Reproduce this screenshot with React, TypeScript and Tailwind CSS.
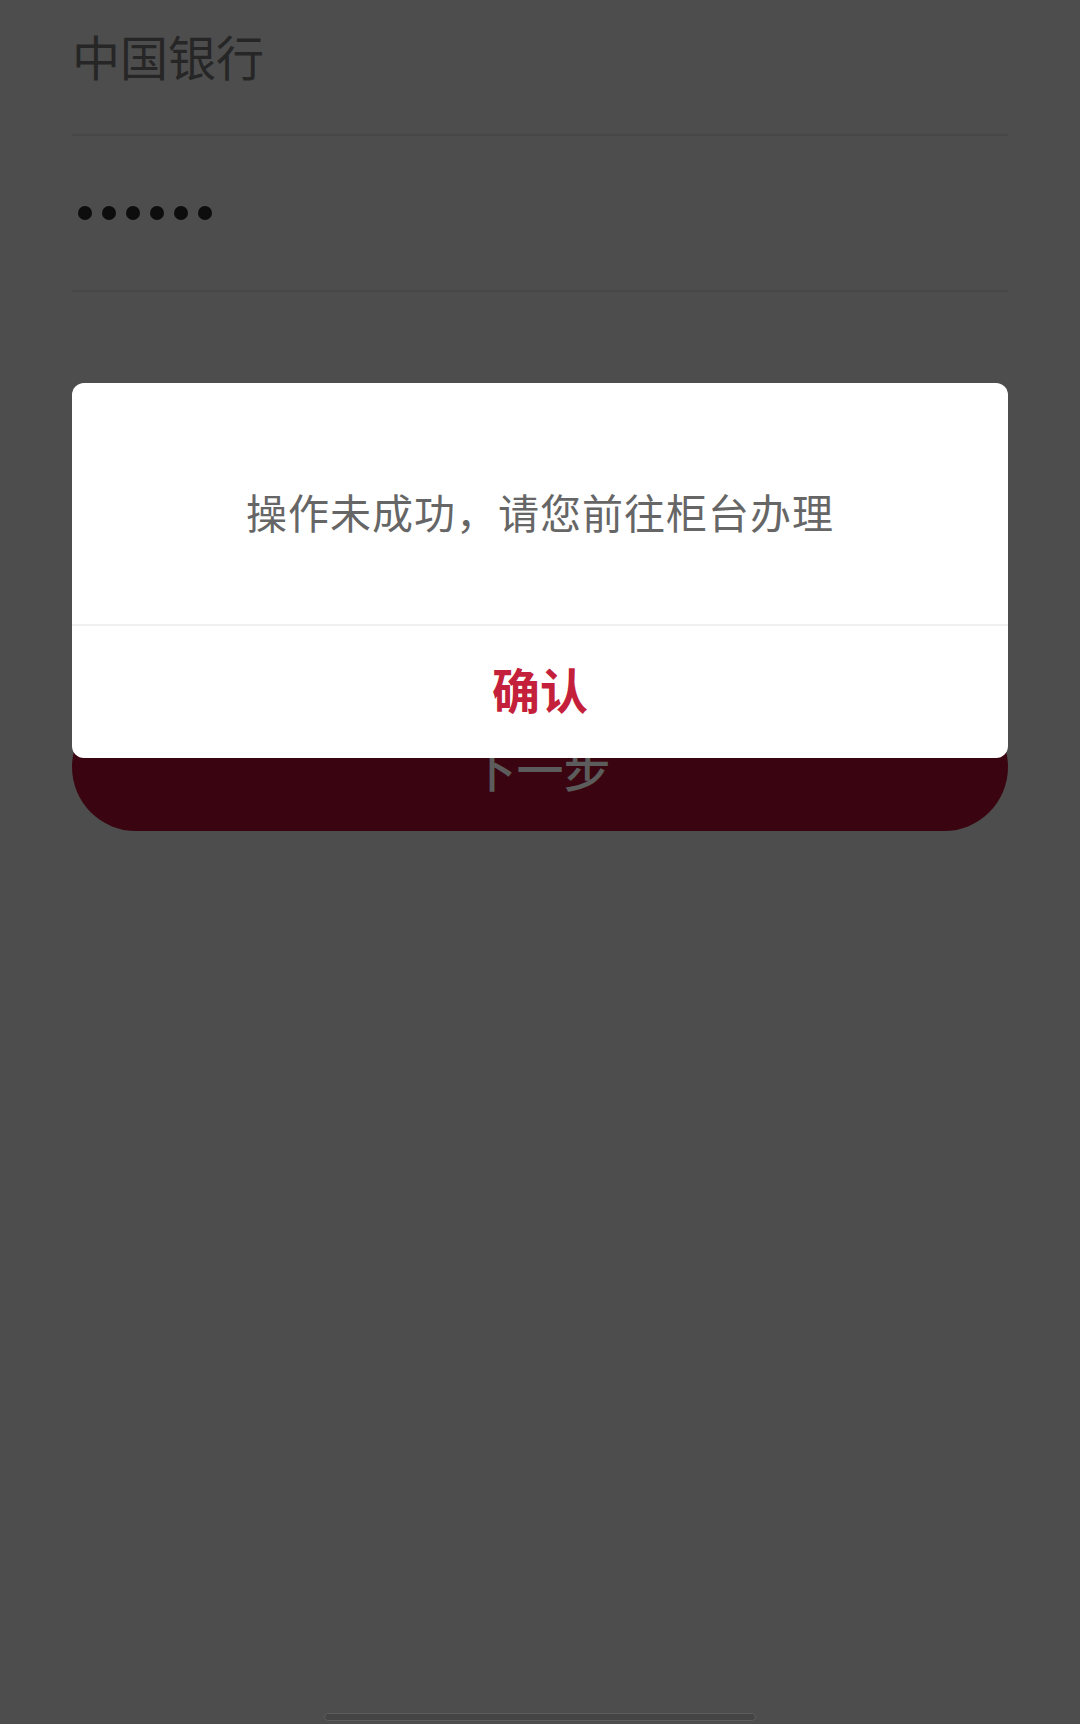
export default function App() {
  const dots = [1, 2, 3, 4, 5, 6];
  return (
    <div
      className="relative flex h-[1724px] w-full flex-col bg-[#4d4d4d]"
      style={{ fontFamily: '"Noto Sans CJK SC", "Noto Sans", sans-serif' }}
    >
      <div className="px-[72px]">
        <div className="h-[136px] border-b-2 border-[#474747] pt-[30px]">
          <span className="text-[48px] leading-[50px] text-[#262626]">中国银行</span>
        </div>
        <div className="flex h-[156px] items-center gap-[10px] border-b-2 border-[#474747] pl-[6px]">
          {dots.map((d) => (
            <span key={d} className="h-[14px] w-[14px] rounded-full bg-[#0d0d0d]" />
          ))}
        </div>
        <button className="mt-[411px] flex h-[128px] w-full items-center justify-center rounded-full bg-[#3a0510]">
          <span className="text-[47px] font-medium leading-[50px] text-[#5c5c5c]">下一步</span>
        </button>
      </div>

      <div className="mt-auto mb-[3px] flex justify-center">
        <div className="h-[8px] w-[432px] rounded-full border border-[#5c5c5c] bg-[#444444]" />
      </div>

      {/* dialog */}
      <div className="absolute left-[72px] top-[383px] w-[936px] overflow-hidden rounded-[12px] bg-white">
        <div className="flex h-[241px] items-center justify-center pt-[14px]">
          <p className="text-[41px] leading-[46px] tracking-[1px] text-[#666666]">操作未成功，请您前往柜台办理</p>
        </div>
        <div className="h-[2px] bg-[#f0f0f0]" />
        <div className="flex h-[132px] items-center justify-center pb-[8px]">
          <span className="text-[48px] font-bold leading-[50px] text-[#c41f3b]">确认</span>
        </div>
      </div>
    </div>
  );
}
